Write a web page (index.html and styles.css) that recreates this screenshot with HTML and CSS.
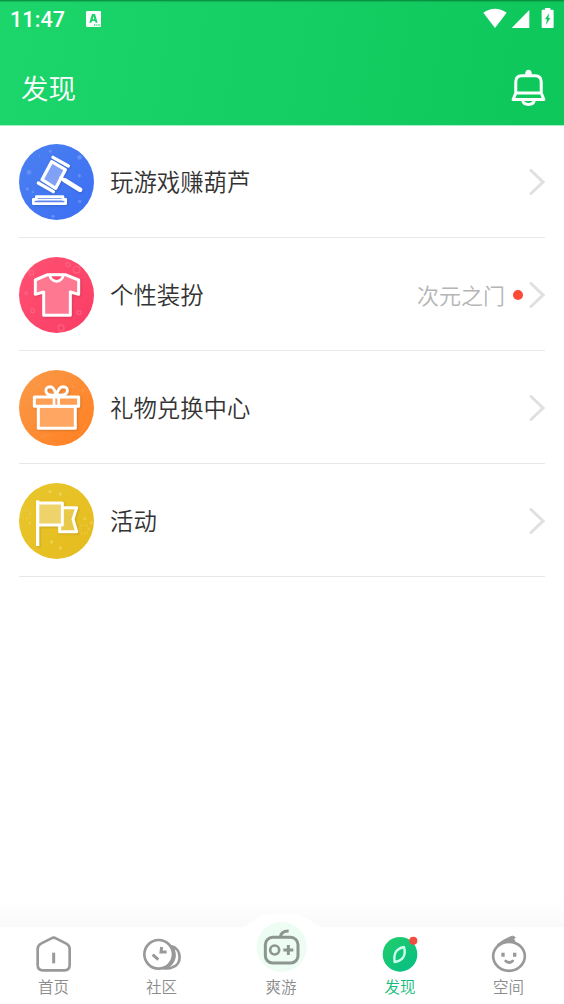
FILE: index.html
```html
<!DOCTYPE html>
<html lang="zh-CN">
<head>
<meta charset="utf-8">
<title>发现</title>
<link rel="stylesheet" href="styles.css">
</head>
<body>
<div class="app">
  <header class="header">
    <div class="status">
      <span class="clock">11:47</span>
      <svg class="ime" viewBox="0 0 45 48"><path fill="#fff" fill-rule="evenodd" d="M4 0H41Q45 0 45 4V44Q45 48 41 48H4Q0 48 0 44V4Q0 0 4 0ZM18 9L10 35H16L18 30H27L29 35H35L27 9ZM20 25L22.500 16L25 25ZM24 40V44H28V40ZM31 40V44H34V40ZM37 40V44H41V40Z"/></svg>
      <svg class="signals" viewBox="130 24 214 62"><g fill="#fff"><path d="M131 38Q166 15 201 38L166 84Z"/><path d="M269 30V84H216Z"/><path fill-rule="evenodd" d="M316 24H332V29H339Q342 29 342 32V81Q342 84 339 84H309Q306 84 306 81V32Q306 29 309 29H316ZM329 39L316 58H322L319 75L332 54H326Z"/></g></svg>
    </div>
    <div class="titlebar">
      <h1 class="title">发现</h1>
      <svg class="bell" viewBox="212 208 104 112" fill="none" stroke="#fff" stroke-width="9" stroke-linejoin="round"><path d="M226 280V246Q226 228 244 228H284Q302 228 302 246V280L310 299H218L226 280H302M247 303Q249 314 264 314Q279 314 281 303"/><path fill="#fff" stroke-width="4" d="M256 225Q256 212 264 212Q272 212 272 225Z"/></svg>
    </div>
  </header>

  <main class="list">
    <a class="row">
      <svg class="badge" viewBox="27 27 225 228">
        <defs><linearGradient id="blue" x2="1" y2="1"><stop stop-color="#4b80f1"/><stop offset="1" stop-color="#3c6ff3"/></linearGradient></defs>
        <ellipse cx="139.500" cy="141" rx="112.500" ry="114" fill="url(#blue)"/>
        <g fill="#6590f5"><circle cx="57" cy="112" r="7"/><circle cx="209" cy="67" r="7"/><circle cx="121" cy="49" r="5"/><circle cx="208" cy="122" r="5"/><circle cx="52" cy="162" r="5"/><circle cx="209" cy="199" r="5"/><circle cx="129" cy="244" r="5"/><circle cx="68" cy="171" r="4"/><circle cx="88" cy="63" r="2"/></g>
        <g class="glyph" stroke-width="10"><path fill="#80a1f5" d="M125 80L166 104L137 160L96 134Z"/><path d="M129 67L175 93M85 144L130 170"/><path stroke-width="10" d="M152 129L164 136"/><path stroke-width="14" d="M164 136L210 164"/><path stroke-width="8" fill="#5c84f1" d="M79 193V185H159V193H167V206H70V193Z"/><path stroke-width="5" d="M78 194H159"/></g>
      </svg>
      <span class="name">玩游戏赚葫芦</span>
      <svg class="chevron" viewBox="0 0 16 26"><path d="M2 1.500L14 13L2 24.500"/></svg>
    </a>
    <a class="row">
      <svg class="badge" viewBox="27 27 225 228">
        <defs><linearGradient id="pink" x2="1" y2="1"><stop stop-color="#ff5273"/><stop offset="1" stop-color="#fa3c64"/></linearGradient></defs>
        <ellipse cx="139.500" cy="141" rx="112.500" ry="114" fill="url(#pink)"/>
        <g fill="none" stroke="#ff7791" stroke-width="4" opacity=".5"><circle cx="200" cy="65" r="10"/><circle cx="174" cy="50" r="6"/><circle cx="64" cy="74" r="7"/><circle cx="153" cy="240" r="9"/><circle cx="68" cy="188" r="6"/><circle cx="207" cy="194" r="6"/><circle cx="49" cy="136" r="4"/></g>
        <g class="glyph" stroke-width="9"><path fill="#ff7892" d="M113 80H166L206 96V139L181 132V202H101V132L76 139V96Z"/><path fill="#fb4a6d" stroke-width="8" d="M119 81Q122 98 140 100Q157 98 160 81Z"/></g>
      </svg>
      <span class="name">个性装扮</span>
      <span class="note">次元之门</span><i class="dot"></i>
      <svg class="chevron" viewBox="0 0 16 26"><path d="M2 1.500L14 13L2 24.500"/></svg>
    </a>
    <a class="row">
      <svg class="badge" viewBox="27 30 225 228">
        <defs><linearGradient id="orange" x2="1" y2="1"><stop stop-color="#fa9a4a"/><stop offset="1" stop-color="#ff7f20"/></linearGradient></defs>
        <ellipse cx="139.500" cy="144" rx="112.500" ry="114" fill="url(#orange)"/>
        <g fill="none" stroke="#ffa65b" stroke-width="2" opacity=".6"><path d="M55 101L96 65M54 205L72 186M207 229L230 188M94 231L119 223"/><circle cx="190" cy="79" r="3"/><circle cx="219" cy="91" r="4"/></g>
        <g class="glyph" stroke-width="9"><path fill="#ffa762" d="M85 139H196V205H85Z"/><path fill="#ff9e55" d="M73 111H206V139H73Z"/><path stroke-width="8" d="M132 111V136M146 111V136"/><path stroke-width="9" d="M133 105C102 109 101 80 121 80C134 81 134 94 139 104C144 94 145 81 159 80C179 80 178 109 146 105"/></g>
      </svg>
      <span class="name">礼物兑换中心</span>
      <svg class="chevron" viewBox="0 0 16 26"><path d="M2 1.500L14 13L2 24.500"/></svg>
    </a>
    <a class="row">
      <svg class="badge" viewBox="27 30 225 228">
        <defs><linearGradient id="gold" x2="1" y2="1"><stop stop-color="#e8c72d"/><stop offset="1" stop-color="#e6bb1d"/></linearGradient></defs>
        <ellipse cx="139.500" cy="144" rx="112.500" ry="114" fill="url(#gold)"/>
        <g fill="#ecd053"><circle cx="120" cy="56" r="5"/><circle cx="151" cy="63" r="5"/><circle cx="125" cy="207" r="5"/><circle cx="151" cy="225" r="5"/><circle cx="59" cy="150" r="4"/><circle cx="224" cy="137" r="4"/><circle cx="244" cy="149" r="4"/></g>
        <g fill="none" stroke="#ecd053" stroke-width="5" stroke-dasharray="3 6"><circle cx="47" cy="124" r="14"/><circle cx="222" cy="169" r="14"/></g>
        <g class="glyph" stroke-width="9"><path fill="#e9c948" d="M149 104H200L189 139L200 176H149Z"/><path fill="#eed36a" stroke="none" d="M83 90H157V156H83Z"/><path d="M83 90H157V156H83"/><path stroke-width="10" stroke-linecap="butt" d="M83 82V219"/></g>
      </svg>
      <span class="name">活动</span>
      <svg class="chevron" viewBox="0 0 16 26"><path d="M2 1.500L14 13L2 24.500"/></svg>
    </a>
  </main>

  <div class="shade"></div>
  <nav class="tabs">
    <a class="tab">
      <svg viewBox="102 102 120 120" fill="none" stroke="#999" stroke-width="8" stroke-linecap="round" stroke-linejoin="round"><path d="M154 115Q161 111 168 115L199 131Q209 136 209 147V195Q209 211 193 211H129Q113 211 113 195V147Q113 136 123 131Z"/><path stroke-width="9" stroke-linecap="butt" d="M161 158V190"/></svg>
      <span>首页</span>
    </a>
    <a class="tab">
      <svg viewBox="426 102 120 120" fill="none" stroke="#999" stroke-width="8" stroke-linecap="round"><circle cx="476" cy="163" r="43"/><path d="M515 139C546 146 547 194 517 202Q510 206 493 205M517 142C530 166 523 188 503 200"/><path stroke-width="9" stroke-linecap="butt" d="M458 164L475 179M485 141L483 156H500"/></svg>
      <span>社区</span>
    </a>
    <a class="tab center">
      <svg class="halo" viewBox="0 0 92 42"><path fill="#fff" d="M0 15C15 12 19 3 28 1Q46 -5 64 1C74 4 78 12 92 15V42H0Z"/></svg>
      <svg class="gourd" viewBox="108 68 156 156" fill="none" stroke="#8c9590"><circle cx="185" cy="143" r="75" fill="#edfdf3" stroke="none"/><rect x="136" y="114" width="98" height="77" rx="22" stroke-width="9"/><circle cx="164" cy="152" r="13.500" stroke-width="8"/><path stroke-width="9" d="M190 152H220M205 137V167M182 113Q182 95 206 95"/></svg>
      <span>爽游</span>
    </a>
    <a class="tab active">
      <svg viewBox="62 102 120 120"><defs><linearGradient id="leaf" x2="1" y2="1"><stop stop-color="#22ce68"/><stop offset="1" stop-color="#05bd87"/></linearGradient></defs><circle cx="122" cy="163" r="52" fill="url(#leaf)"/><path d="M134 141C110 146 102 160 106 186C131 182 141 166 134 141Z" fill="none" stroke="#cffff0" stroke-width="7" stroke-linejoin="round"/><circle cx="162" cy="122" r="12" fill="#f44c40"/></svg>
      <span>发现</span>
    </a>
    <a class="tab">
      <svg viewBox="387 102 120 120" fill="none" stroke="#999" stroke-width="8" stroke-linecap="round" stroke-linejoin="round"><ellipse cx="447" cy="169" rx="47.500" ry="43.500"/><path fill="#999" stroke-width="3" d="M413 133Q430 119 448 112Q459 106 463 110C469 115 460 117 461 120Q468 121 463 128Q434 124 413 133Z"/><path d="M437 183Q448 192 458 183"/><path stroke-width="10" stroke-linecap="butt" d="M429 158V170M464 158V170"/></svg>
      <span>空间</span>
    </a>
  </nav>
</div>
</body>
</html>
```
FILE: styles.css
```css
* { box-sizing: border-box; }
body { margin: 0; background: #fff; font-family: "Noto Sans CJK SC DemiLight", "Noto Sans CJK SC", sans-serif; font-weight: 350; }
.app { width: 564px; height: 1004px; display: flex; flex-direction: column; background: #fff; overflow: hidden; }
svg { display: block; flex: none; }

.header { height: 125px; flex: none; color: #fff; background: linear-gradient(100deg, #1cd66c, #0dc75b); box-shadow: inset 0 3px 2px -2px #087b35, 0 1px 0 #a9eec6; }
.status { height: 38px; padding: 0 10px; display: flex; align-items: center; }
.clock { font: 500 21.500px/38px Roboto, sans-serif; letter-spacing: .1px; padding-top: 1px; width: 76px; }
.ime { width: 15px; height: 16px; margin-top: -1px; }
.signals { width: 71.300px; height: 20.700px; margin-left: auto; margin-top: -2px; }
.titlebar { height: 87px; padding: 0 18px 0 21px; display: flex; align-items: center; justify-content: space-between; }
.title { margin: 0; font-size: 27.500px; line-height: 40px; font-weight: 350; margin-top: 10px; }
.bell { width: 35px; height: 37.500px; margin-top: 13px; }

.list { padding: 0 19px; flex: 1; }
.row { height: 113px; display: flex; align-items: center; border-bottom: 1px solid #e8e8e8; padding-top: 1px; }
.badge { width: 75px; height: 76px; }
.glyph { fill: none; stroke: #fff; stroke-linecap: round; stroke-linejoin: round; filter: drop-shadow(3px 3px 3px #0002); }
.name { margin: -2px 0 0 16px; font-size: 23.400px; line-height: 34px; color: #333; }
.note { margin: -2px 0 0 auto; font-size: 22px; line-height: 32px; color: #b5b5b5; }
.dot { width: 10px; height: 10px; border-radius: 50%; background: #fa4b38; margin: 0 6px 0 8px; }
.chevron { width: 16px; height: 26px; margin-left: auto; fill: none; stroke: #e0e0e0; stroke-width: 3; stroke-linecap: round; }
.dot + .chevron { margin-left: 0; }
.list .row:first-child { height: 113px; }

.shade { height: 27px; flex: none; background: linear-gradient(#fff, #f9f9f9); }
.tabs { height: 77px; flex: none; display: grid; grid-template-columns: 107px 109px 130px 108px 109px; background: #fff; }
.tab { display: flex; flex-direction: column; align-items: center; padding-top: 7px; font-size: 15.500px; line-height: 22px; color: #8c8c8c; position: relative; }
.tab svg { width: 40px; height: 40px; }
.tab span { margin-top: 1px; }
.active { color: #12bd78; }
.center svg.halo { position: absolute; width: 92px; height: 42px; top: -13px; left: 20px; }
.center svg.gourd { position: relative; width: 52px; height: 52px; margin: -12px 0 0 1px; z-index: 1; }
```
